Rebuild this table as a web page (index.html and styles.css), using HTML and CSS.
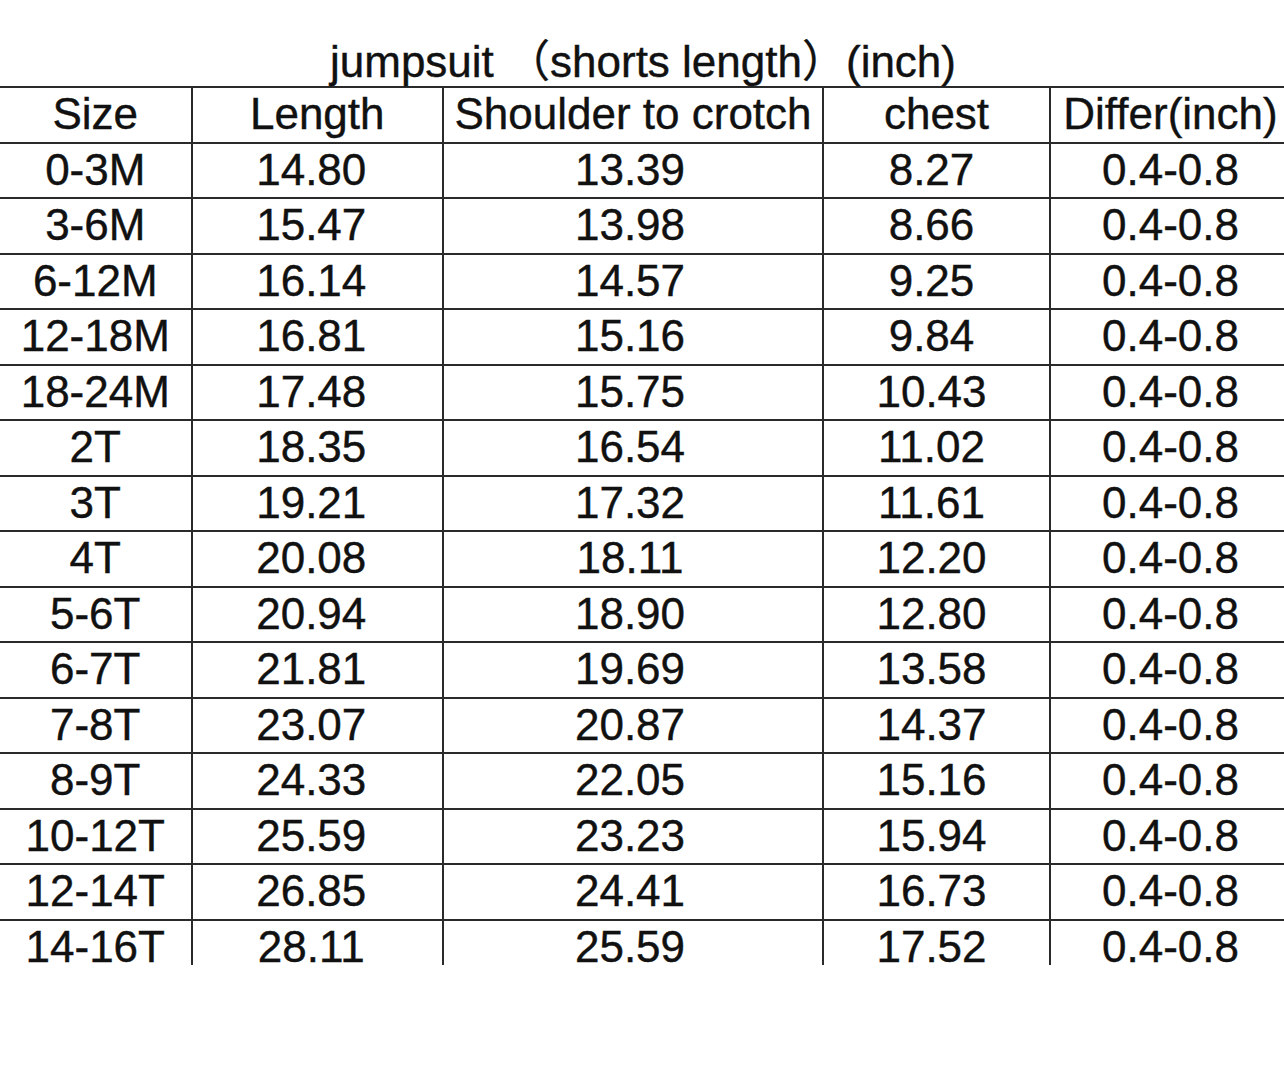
FILE: index.html
```html
<!DOCTYPE html>
<html>
<head>
<meta charset="utf-8">
<link rel="stylesheet" href="styles.css">
</head>
<body>
<div class="page">
  <div class="title">jumpsuit （shorts length）(inch)</div>
  <div class="clip">
    <div class="grid">
      <div class="c h">Size</div><div class="c h">Length</div><div class="c h">Shoulder to crotch</div><div class="c h">chest</div><div class="c h last">Differ(inch)</div>
      <div class="c">0-3M</div><div class="c n2">14.80</div><div class="c n3">13.39</div><div class="c n4">8.27</div><div class="c last">0.4-0.8</div>
      <div class="c">3-6M</div><div class="c n2">15.47</div><div class="c n3">13.98</div><div class="c n4">8.66</div><div class="c last">0.4-0.8</div>
      <div class="c">6-12M</div><div class="c n2">16.14</div><div class="c n3">14.57</div><div class="c n4">9.25</div><div class="c last">0.4-0.8</div>
      <div class="c">12-18M</div><div class="c n2">16.81</div><div class="c n3">15.16</div><div class="c n4">9.84</div><div class="c last">0.4-0.8</div>
      <div class="c">18-24M</div><div class="c n2">17.48</div><div class="c n3">15.75</div><div class="c n4">10.43</div><div class="c last">0.4-0.8</div>
      <div class="c">2T</div><div class="c n2">18.35</div><div class="c n3">16.54</div><div class="c n4">11.02</div><div class="c last">0.4-0.8</div>
      <div class="c">3T</div><div class="c n2">19.21</div><div class="c n3">17.32</div><div class="c n4">11.61</div><div class="c last">0.4-0.8</div>
      <div class="c">4T</div><div class="c n2">20.08</div><div class="c n3">18.11</div><div class="c n4">12.20</div><div class="c last">0.4-0.8</div>
      <div class="c">5-6T</div><div class="c n2">20.94</div><div class="c n3">18.90</div><div class="c n4">12.80</div><div class="c last">0.4-0.8</div>
      <div class="c">6-7T</div><div class="c n2">21.81</div><div class="c n3">19.69</div><div class="c n4">13.58</div><div class="c last">0.4-0.8</div>
      <div class="c">7-8T</div><div class="c n2">23.07</div><div class="c n3">20.87</div><div class="c n4">14.37</div><div class="c last">0.4-0.8</div>
      <div class="c">8-9T</div><div class="c n2">24.33</div><div class="c n3">22.05</div><div class="c n4">15.16</div><div class="c last">0.4-0.8</div>
      <div class="c">10-12T</div><div class="c n2">25.59</div><div class="c n3">23.23</div><div class="c n4">15.94</div><div class="c last">0.4-0.8</div>
      <div class="c">12-14T</div><div class="c n2">26.85</div><div class="c n3">24.41</div><div class="c n4">16.73</div><div class="c last">0.4-0.8</div>
      <div class="c">14-16T</div><div class="c n2">28.11</div><div class="c n3">25.59</div><div class="c n4">17.52</div><div class="c last">0.4-0.8</div>
    </div>
  </div>
</div>
</body>
</html>
```
FILE: styles.css
```css
html, body {
  margin: 0;
  padding: 0;
  background: #ffffff;
}
.page {
  width: 1284px;
  height: 1085px;
  overflow: hidden;
  font-family: "Liberation Sans", Arial, "Noto Sans CJK SC", sans-serif;
  color: #111111;
  -webkit-text-stroke: 0.4px #111111;
}
.title {
  margin-top: 37px;
  height: 49px;
  line-height: 49px;
  font-size: 44px;
  text-align: center;
  white-space: nowrap;
  overflow: visible;
  padding-left: 2px;
}
.clip {
  width: 1284px;
  height: 879px;
  overflow: hidden;
}
.grid {
  display: grid;
  grid-template-columns: 192.5px 251.5px 380px 227px 239px;
  grid-auto-rows: 55.5px;
  width: 1290px;
  border-top: 2px solid #2a2a2a;
}
.c {
  box-sizing: border-box;
  border-right: 2px solid #2a2a2a;
  border-bottom: 2px solid #2a2a2a;
  font-size: 44px;
  line-height: 52px;
  text-align: center;
  white-space: nowrap;
  overflow: visible;
}
.c.last {
  border-right: none;
}
.n2 {
  padding-right: 12px;
}
.n3 {
  padding-right: 6px;
}
.n4 {
  padding-right: 10px;
}
```
